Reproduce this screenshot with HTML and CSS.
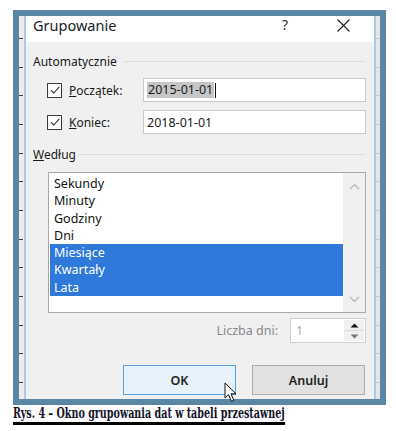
FILE: index.html
```html
<!DOCTYPE html>
<html lang="pl">
<head>
<meta charset="utf-8">
<title>Grupowanie</title>
<link rel="stylesheet" href="styles.css">
</head>
<body>
<div class="page">
  <div class="frame">
    <div class="strip-left"></div>
    <div class="dialog">
      <div class="titlebar">
        <span class="title">Grupowanie</span>
        <span class="help">?</span>
        <svg class="close" width="13" height="13" viewBox="0 0 13 13"><path d="M0.5 0.5 L12.5 12.5 M12.5 0.5 L0.5 12.5" stroke="#222" stroke-width="1.1" fill="none"/></svg>
      </div>
      <div class="body">
        <div class="legend"><span>Automatycznie</span><span class="rule"></span></div>
        <div class="row">
          <label class="check"><span class="box"><svg width="12" height="12" viewBox="0 0 12 12"><path d="M2 6.2 L4.8 9 L10.3 2.8" stroke="#333" stroke-width="1.1" fill="none"/></svg></span><span><u>P</u>oczątek:</span></label>
          <div class="input"><span class="sel">2015-01-01</span><span class="caret"></span></div>
        </div>
        <div class="row">
          <label class="check"><span class="box"><svg width="12" height="12" viewBox="0 0 12 12"><path d="M2 6.2 L4.8 9 L10.3 2.8" stroke="#333" stroke-width="1.1" fill="none"/></svg></span><span><u>K</u>oniec:</span></label>
          <div class="input"><span>2018-01-01</span></div>
        </div>
        <div class="legend legend2"><span><u>W</u>edług</span><span class="rule"></span></div>
        <div class="listbox">
          <ul class="items">
            <li>Sekundy</li>
            <li>Minuty</li>
            <li>Godziny</li>
            <li>Dni</li>
            <li class="on">Miesiące</li>
            <li class="on">Kwartały</li>
            <li class="on">Lata</li>
          </ul>
          <div class="scrollbar">
            <svg width="11" height="7" viewBox="0 0 11 7"><path d="M1 6 L5.5 1.5 L10 6" stroke="#b4b4b4" stroke-width="1.2" fill="none"/></svg>
            <svg width="11" height="7" viewBox="0 0 11 7"><path d="M1 1 L5.5 5.5 L10 1" stroke="#b4b4b4" stroke-width="1.2" fill="none"/></svg>
          </div>
        </div>
        <div class="days">
          <span class="days-label">Liczba dni:</span>
          <div class="spin">
            <span class="spin-val">1</span>
            <div class="spin-btns">
              <div class="spin-btn"><svg width="9" height="5" viewBox="0 0 9 5"><path d="M0.5 4.5 L4.5 0.5 L8.5 4.5 Z" fill="#111"/></svg></div>
              <div class="spin-btn"><svg width="9" height="5" viewBox="0 0 9 5"><path d="M0.5 0.5 L4.5 4.5 L8.5 0.5 Z" fill="#777"/></svg></div>
            </div>
          </div>
        </div>
        <div class="buttons">
          <button class="btn btn-ok">OK</button>
          <button class="btn">Anuluj</button>
        </div>
      </div>
      <svg class="cursor" width="14" height="21" viewBox="0 0 14 21"><path d="M1 1 L1 16 L4.5 12.6 L7.4 19.3 L9.8 18.3 L7 11.8 L12 11.8 Z" fill="#fff" stroke="#111" stroke-width="1" stroke-linejoin="round"/></svg>
    </div>
    <div class="strip-right"></div>
  </div>
  <div class="caption">Rys. 4 – Okno grupowania dat w tabeli przestawnej</div>
</div>
</body>
</html>
```
FILE: styles.css
```css
* { box-sizing: border-box; }
html, body { margin: 0; padding: 0; background: #fff; }
body { font-family: "Noto Sans", "Open Sans", sans-serif; font-size: 12px; color: #1a1a1a; }

.page { padding: 10px 0 0 13px; width: 396px; height: 431px; }

.frame {
  width: 373px;
  height: 395px;
  background: #5a87a5;
  padding: 6px;
  display: flex;
}

.strip-left {
  width: 7px;
  border-right: 2px solid #a9c9e8;
  background-color: #ececec;
  background-image: repeating-linear-gradient(to bottom, transparent 0, transparent 22px, #3a3a3a 22px, #3a3a3a 23px, transparent 23px, transparent 28.67px);
  background-size: 4px 100%;
  background-repeat: no-repeat;
}

.strip-right {
  width: 6px;
  border-left: 2px solid #a9c9e8;
  background-color: #e6e6e6;
  background-image: repeating-linear-gradient(to bottom, transparent 0, transparent 22px, #c8c8c8 22px, #c8c8c8 23px, transparent 23px, transparent 28.67px);
}

.dialog {
  position: relative;
  width: 348px;
  background: #f0f0f0;
  display: flex;
  flex-direction: column;
}

.titlebar {
  height: 26px;
  background: #fff;
  display: flex;
  align-items: flex-start;
  padding: 0 0 0 7px;
}
.title { font-size: 14.5px; line-height: 18px; margin-top: 0; color: #222; flex: 1; }
.help { font-size: 14px; line-height: 18px; color: #333; width: 8px; margin-right: 47px; }
.close { margin-top: 3px; margin-right: 24px; }

.body {
  flex: 1;
  padding: 0 8px 0 7px;
  display: flex;
  flex-direction: column;
}

.legend { display: flex; align-items: center; height: 16px; margin-top: 12px; line-height: 16px; }
.legend .rule { flex: 1; height: 1px; background: #dcdcdc; margin-left: 6px; margin-top: -1px; }
.legend2 { margin-top: 13px; }
.legend2 .rule { margin-left: 3px; }

.row { display: flex; align-items: center; height: 24px; margin-top: 8px; }
.check { display: flex; align-items: center; width: 110px; padding-left: 14px; }
.box {
  width: 15px; height: 15px;
  border: 1px solid #3c3c3c;
  background: #fff;
  display: flex; align-items: center; justify-content: center;
  margin-right: 7px;
}
.input {
  flex: 1;
  height: 24px;
  background: #fff;
  border: 1px solid #c9c9c9;
  display: flex;
  align-items: center;
  padding-left: 3px;
  font-size: 12.5px;
}
.input .sel { background: #c6c6c6; padding: 0 1px; line-height: 16px; }
.caret { width: 1px; height: 15px; background: #111; margin-left: 1px; }

.listbox {
  margin-top: 9px;
  margin-left: 15px;
  height: 141px;
  border: 1px solid #a8a8a8;
  background: #fff;
  display: flex;
}
.items { list-style: none; margin: 0; padding: 2px 0 0 1px; flex: 1; }
.items li { height: 17.3px; line-height: 17px; padding-left: 4px; color: #111; font-size: 12.5px; }
.items li.on { background: #2e79d9; color: #fff; }
.scrollbar {
  width: 22px;
  background: #f0f0f0;
  display: flex;
  flex-direction: column;
  align-items: center;
  justify-content: space-between;
  padding: 10px 0 9px;
}

.days { display: flex; justify-content: flex-end; align-items: center; margin-top: 5px; height: 25px; }
.days-label { color: #888; font-size: 12.5px; margin-right: 12px; }
.spin {
  width: 76px; height: 25px;
  border: 1px solid #cfcfcf;
  background: #fff;
  display: flex;
}
.spin-val { flex: 1; color: #a8a8a8; padding-left: 5px; line-height: 23px; font-size: 12.5px; }
.spin-btns { width: 20px; display: flex; flex-direction: column; margin: 1px 1px 1px 0; }
.spin-btn { flex: 1; background: #f0f0f0; display: flex; align-items: center; justify-content: center; }
.spin-btn + .spin-btn { border-top: 1px solid #dadada; }

.buttons { display: flex; justify-content: flex-end; margin-top: 22px; padding-right: 1px; }
.btn {
  width: 113px; height: 30px;
  margin-left: 16px;
  font-family: "Noto Sans", sans-serif;
  font-size: 12.5px;
  font-weight: 600;
  color: #222;
  background: #e1e1e1;
  border: 1px solid #adadad;
}
.btn-ok { background: #e5f1fb; border: 1px solid #5a9fdc; margin-left: 0; }

.cursor { position: absolute; left: 198px; top: 366px; }

.caption {
  display: inline-block;
  font-family: "DejaVu Serif", serif;
  font-stretch: condensed;
  font-weight: bold;
  font-size: 14px;
  line-height: 17px;
  color: #14142a;
  border-bottom: 3px solid #000;
  transform: scaleX(0.76);
  transform-origin: 0 0;
  white-space: nowrap;
}
```
